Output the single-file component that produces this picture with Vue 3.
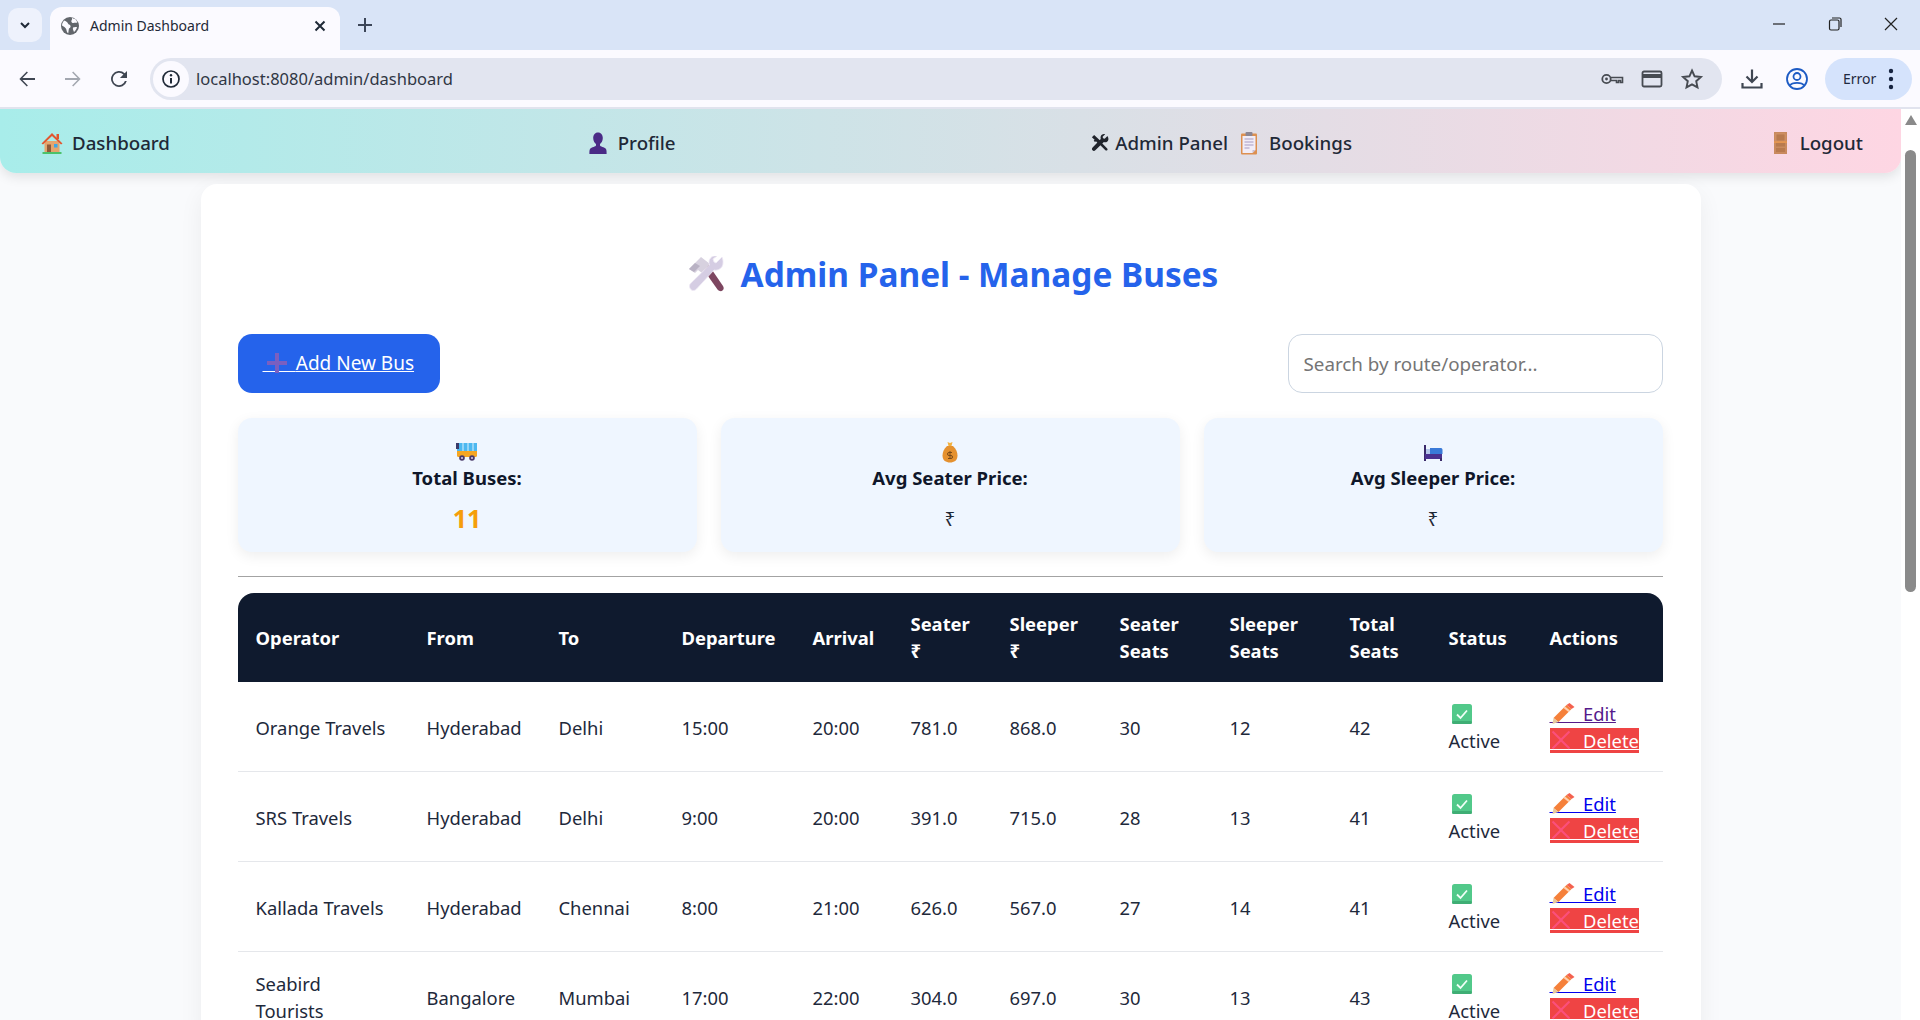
<script setup>
const buses = [
  { id: 1, operator: 'Orange Travels', from: 'Hyderabad', to: 'Delhi', dep: '15:00', arr: '20:00', seater: '781.0', sleeper: '868.0', seaterSeats: 30, sleeperSeats: 12, total: 42, visited: true },
  { id: 2, operator: 'SRS Travels', from: 'Hyderabad', to: 'Delhi', dep: '9:00', arr: '20:00', seater: '391.0', sleeper: '715.0', seaterSeats: 28, sleeperSeats: 13, total: 41 },
  { id: 3, operator: 'Kallada Travels', from: 'Hyderabad', to: 'Chennai', dep: '8:00', arr: '21:00', seater: '626.0', sleeper: '567.0', seaterSeats: 27, sleeperSeats: 14, total: 41 },
  { id: 4, operator: 'Seabird Tourists', from: 'Bangalore', to: 'Mumbai', dep: '17:00', arr: '22:00', seater: '304.0', sleeper: '697.0', seaterSeats: 30, sleeperSeats: 13, total: 43 }
]

const colWidths = [171, 132, 123, 131, 98, 99, 110, 110, 120, 99, 101, 131]
</script>

<template>
  <div class="window">
    <!-- browser tab strip -->
    <div class="tabstrip">
      <div class="tab-search">
        <svg width="14" height="14" viewBox="0 0 14 14"><path d="M3 5l4 4 4-4" fill="none" stroke="#1f2937" stroke-width="2"/></svg>
      </div>
      <div class="tab">
        <svg width="20" height="20" viewBox="0 0 20 20"><circle cx="10" cy="10" r="9" fill="#62666c"/><path d="M4 4.500c2 .5 3.500 1.500 4 3 .3 1.200 2 1 2.500 2.200.4 1.300-.5 2.300-1.500 2.800-.5 1.500-.3 3-.8 4.800-1.500-1-1.700-3-2-4.300C5.500 11.500 3.500 10.500 2 9.500 2 7.500 3 6 4 4.500zM12 1.800c1 .9 2.500 1 3.500 1.500.8 1 1.500 2 1.800 3.200-1.300.5-2.800-.2-3.800.5-1 .3-2-.5-2.200-1.500 0-1.200 1.200-2 .7-3.700zM13 11.500c1.200-.7 2.800-.7 4-.5-.4 2-1.500 3.800-3 5-.5-1.500-1.500-3-1-4.500z" fill="#fbfaff"/></svg>
        <span class="tab-title">Admin Dashboard</span>
        <svg class="tab-x" width="14" height="14" viewBox="0 0 14 14"><path d="M2.500 2.500l9 9M11.500 2.500l-9 9" stroke="#1f2937" stroke-width="2"/></svg>
      </div>
      <svg class="newtab" width="18" height="18" viewBox="0 0 18 18"><path d="M9 2v14M2 9h14" stroke="#3c4658" stroke-width="2"/></svg>
      <div class="win-controls">
        <svg width="16" height="16" viewBox="0 0 16 16"><path d="M2 8h12" stroke="#222" stroke-width="1.200"/></svg>
        <svg width="16" height="16" viewBox="0 0 16 16"><rect x="2.500" y="4" width="9.500" height="10" rx="1.500" fill="none" stroke="#222" stroke-width="1.200"/><path d="M5 2h7.500A1.500 1.500 0 0 1 14 3.500V11" fill="none" stroke="#222" stroke-width="1.200"/></svg>
        <svg width="16" height="16" viewBox="0 0 16 16"><path d="M2 2l12 12M14 2L2 14" stroke="#222" stroke-width="1.200"/></svg>
      </div>
    </div>

    <!-- browser toolbar -->
    <div class="toolbar">
      <div class="nav-btns">
        <svg width="24" height="24" viewBox="0 0 24 24"><path d="M20 11.100H7.500l5.400-5.500-1.100-1.100L4.400 12l7.400 7.500 1.100-1.100-5.400-5.500H20z" fill="#3f4652"/></svg>
        <svg width="24" height="24" viewBox="0 0 24 24"><path d="M4 11.100h12.500l-5.400-5.500 1.100-1.100 7.400 7.500-7.400 7.500-1.100-1.100 5.400-5.500H4z" fill="#a3a7b0"/></svg>
        <svg width="24" height="24" viewBox="0 0 24 24"><path d="M17.700 6.300A8 8 0 1 0 19.800 14h-1.900a6.200 6.200 0 1 1-1.500-6.400L13 11h7V4z" fill="#3f4652"/></svg>
      </div>
      <div class="omnibox">
        <div class="info-chip">
          <svg width="20" height="20" viewBox="0 0 20 20"><circle cx="10" cy="10" r="8" fill="none" stroke="#1f2937" stroke-width="1.700"/><path d="M10 9v5.500" stroke="#1f2937" stroke-width="2"/><circle cx="10" cy="6.300" r="1.200" fill="#1f2937"/></svg>
        </div>
        <span class="url">localhost:8080/admin/dashboard</span>
        <div class="omni-icons">
          <svg width="24" height="24" viewBox="0 0 24 24"><circle cx="6.500" cy="12" r="4.200" fill="none" stroke="#474b52" stroke-width="1.800"/><circle cx="6.500" cy="12" r="1.400" fill="#474b52"/><path d="M10.500 10.500h12v5h-2v-2h-2v2h-2v-2h-6" fill="none" stroke="#474b52" stroke-width="1.600"/></svg>
          <svg width="24" height="24" viewBox="0 0 24 24"><rect x="2.500" y="4.500" width="19" height="15" rx="1.500" fill="none" stroke="#474b52" stroke-width="1.800"/><rect x="3" y="7" width="18" height="4" fill="#474b52"/></svg>
          <svg width="24" height="24" viewBox="0 0 24 24"><path d="M12 3.500l2.600 5.800 6.300.7-4.700 4.200 1.300 6.200L12 17.300l-5.500 3.100 1.300-6.200L3.100 10l6.300-.7z" fill="none" stroke="#474b52" stroke-width="1.900"/></svg>
        </div>
      </div>
      <div class="tool-icons">
        <svg width="24" height="24" viewBox="0 0 24 24"><path d="M12 2.500v12M6.500 9.500l5.500 5.500 5.500-5.500M2.500 16v4.500h19V16" fill="none" stroke="#3f4652" stroke-width="2.200"/></svg>
        <svg width="24" height="24" viewBox="0 0 24 24"><circle cx="12" cy="12" r="10" fill="none" stroke="#1d5bc4" stroke-width="1.800"/><circle cx="12" cy="9.500" r="3.500" fill="none" stroke="#1d5bc4" stroke-width="1.800"/><path d="M5 18.500c2-3.500 12-3.500 14 0" fill="none" stroke="#1d5bc4" stroke-width="1.800"/></svg>
      </div>
      <div class="error-pill">
        <span>Error</span>
        <svg width="6" height="22" viewBox="0 0 6 22"><circle cx="3" cy="3" r="2.200" fill="#16233f"/><circle cx="3" cy="11" r="2.200" fill="#16233f"/><circle cx="3" cy="19" r="2.200" fill="#16233f"/></svg>
      </div>
    </div>

    <div class="viewport">
      <div class="page">
        <nav class="navbar">
          <a class="nav-link">
            <svg class="nav-emoji" width="24" height="24" viewBox="0 0 24 24"><rect x="4.500" y="10" width="15" height="11" fill="#e5a56d"/><rect x="7" y="13.500" width="4" height="7.500" fill="#8d5a3a"/><rect x="14" y="13" width="3.500" height="3.500" fill="#3ba7e8"/><path d="M12 2L1.500 12.500l1.500 1L12 5l9 8.500 1.500-1z" fill="#e2562f"/><rect x="16.500" y="3" width="2.500" height="5" fill="#e2562f"/><rect x="2.500" y="21" width="19" height="2" fill="#4cc26a"/></svg>
            Dashboard
          </a>
          <a class="nav-link">
            <svg class="nav-emoji" width="24" height="24" viewBox="0 0 24 24"><path d="M12 1.500c3.200 0 4.800 2.500 4.800 5.500 0 2.800-1.400 5-2.800 6v1.500c0 1 4.500 1.500 6 3.500.6.900.6 3 .6 5H3.400c0-2 0-4.100.6-5 1.500-2 6-2.500 6-3.500V13c-1.400-1-2.800-3.200-2.800-6 0-3 1.600-5.500 4.800-5.500z" fill="#4a2b86"/></svg>
            Profile
          </a>
          <div class="nav-group">
            <a class="nav-link admin-link">
              <svg class="tools-mono" width="18" height="18" viewBox="0 0 20 20"><path d="M3.500 1L1 3.500l3 3-1 1 1.500 1.500 1-1 3 3L11 8 3.500 1z" fill="#20242c"/><path d="M18 2.500l-2.800 2.800-1.800-.5-.5-1.800L15.700.2c-2-.6-4.500.2-5 2.800-.2 1 0 1.800.2 2.500L1.800 15c-1 1-1 2.200-.1 3.100.9.900 2.200.9 3.100-.1l9.500-9.100c.8.300 1.700.400 2.500.2 2.500-.6 3.400-3.400 1.700-6.600z" fill="#20242c"/><path d="M9 11l2-2 7 7c.6.600.6 1.400 0 2s-1.400.6-2 0z" fill="#20242c"/></svg>
              Admin Panel
            </a>
            <a class="nav-link">
              <svg class="nav-emoji" width="24" height="24" viewBox="0 0 24 24"><rect x="4" y="2.500" width="16" height="21" rx="1" fill="#dd9050"/><path d="M5.500 5h13v14l-3 3h-10z" fill="#f1edf7"/><path d="M18.500 19h-3v3z" fill="#c9bfd2"/><rect x="8.500" y="1" width="7" height="4" rx="1" fill="#8b8693"/><path d="M7.500 8h9M7.500 11h9M7.500 14h9M7.500 17h5" stroke="#a89bc4" stroke-width="1.200"/></svg>
              Bookings
            </a>
          </div>
          <a class="nav-link">
            <svg class="nav-emoji" width="24" height="24" viewBox="0 0 24 24"><rect x="6" y="1" width="13" height="22" fill="#c98a5e"/><rect x="8" y="3" width="9" height="7" fill="#b87a4e" stroke="#d99b6e" stroke-width=".6"/><rect x="8" y="12" width="9" height="3.500" fill="#b87a4e"/><rect x="8" y="17" width="9" height="4" fill="#b87a4e"/><rect x="6" y="10.500" width="13" height="1.200" fill="#f09a4a"/></svg>
            Logout
          </a>
        </nav>

        <main class="panel">
          <h1 class="panel-title">
            <svg class="title-emoji" width="38" height="36" viewBox="0 0 38 36"><path d="M16 13l5-5 15 22c1 2 1 3-.5 4.500S32 35 30.500 33.500z" fill="#7d4660"/><path d="M2 13l12-12 9 7-8 9-4-3-3 3z" fill="#d7d1df"/><path d="M2 13l6-6 5 3-6 6z" fill="#b9b2c4"/><path d="M35 1l-6 6-2-1-1-3 4-3c-4-1-8 2-8 6 0 1 0 2 .5 3L4 27c-2 2-2 4-.5 6s4 2 6 0L27 14c4 1 9-2 9-7 0-2 0-4-1-6z" fill="#d5cde3" stroke="#efeaf5" stroke-width=".8"/></svg>
            Admin Panel - Manage Buses
          </h1>

          <div class="top-actions">
            <a class="add-btn">
              <span class="glyph-slot plus-slot">&nbsp;&nbsp;&nbsp;&nbsp;&nbsp;&nbsp;<svg width="20" height="20" viewBox="0 0 20 20"><path d="M8 0h4v8h8v4h-8v8H8v-8H0V8h8z" fill="#7a5fc0"/></svg></span>Add New Bus
            </a>
            <input class="search" type="text" placeholder="Search by route/operator..." />
          </div>

          <section class="stats">
            <div class="stat-card">
              <svg class="stat-emoji" width="22" height="20" viewBox="0 0 22 20"><rect x="1" y="1" width="20" height="14" rx="1.500" fill="#f5a623"/><rect x="1" y="1" width="20" height="8" fill="#4db8f0"/><path d="M7 1v8M12 1v8M17 1v8" stroke="#fff" stroke-width=".8"/><rect x="0" y="1" width="3" height="6" fill="#3a3a6a"/><circle cx="6" cy="16" r="2.800" fill="#4a3a6a"/><circle cx="16" cy="16" r="2.800" fill="#4a3a6a"/><circle cx="6" cy="16" r="1" fill="#d8d2e8"/><circle cx="16" cy="16" r="1" fill="#d8d2e8"/></svg>
              <div class="stat-label">Total Buses:</div>
              <div class="stat-value accent">11</div>
            </div>
            <div class="stat-card">
              <svg class="stat-emoji" width="22" height="22" viewBox="0 0 22 22"><path d="M8 5h6c3 3 4.500 6 4.500 9.500 0 5-3.500 7-7.500 7s-7.500-2-7.500-7C3.500 11 5 8 8 5z" fill="#e5912f"/><path d="M8.500 1l2.500 1 2.500-1-1 4h-3z" fill="#f3b23f"/><path d="M11 10v8M13 11.500h-3a1.300 1.300 0 0 0 0 3h2a1.300 1.300 0 0 1 0 3H9" fill="none" stroke="#7a4a18" stroke-width="1"/></svg>
              <div class="stat-label">Avg Seater Price:</div>
              <div class="stat-value">₹</div>
            </div>
            <div class="stat-card">
              <svg class="stat-emoji" width="22" height="20" viewBox="0 0 22 20"><rect x="2" y="3" width="2" height="16" fill="#3a2a6a"/><rect x="3" y="12" width="17" height="5" fill="#4a3190"/><path d="M8 6h11c1 0 1.500 1 1.500 2v4H8z" fill="#3a7ad8"/><rect x="4" y="7" width="4" height="5" fill="#b5c7ea"/><rect x="18" y="16" width="2" height="3" fill="#3a2a6a"/></svg>
              <div class="stat-label">Avg Sleeper Price:</div>
              <div class="stat-value">₹</div>
            </div>
          </section>

          <hr class="divider" />

          <table class="bus-table">
            <colgroup>
              <col v-for="(w, i) in colWidths" :key="i" :style="{ width: w + 'px' }" />
            </colgroup>
            <thead>
              <tr>
                <th>Operator</th>
                <th>From</th>
                <th>To</th>
                <th>Departure</th>
                <th>Arrival</th>
                <th>Seater ₹</th>
                <th>Sleeper ₹</th>
                <th>Seater Seats</th>
                <th>Sleeper Seats</th>
                <th>Total Seats</th>
                <th>Status</th>
                <th>Actions</th>
              </tr>
            </thead>
            <tbody>
              <tr v-for="bus in buses" :key="bus.id">
                <td>{{ bus.operator }}</td>
                <td>{{ bus.from }}</td>
                <td>{{ bus.to }}</td>
                <td>{{ bus.dep }}</td>
                <td>{{ bus.arr }}</td>
                <td>{{ bus.seater }}</td>
                <td>{{ bus.sleeper }}</td>
                <td>{{ bus.seaterSeats }}</td>
                <td>{{ bus.sleeperSeats }}</td>
                <td>{{ bus.total }}</td>
                <td>
                  <svg class="check" width="20" height="20" viewBox="0 0 20 20"><rect width="20" height="20" rx="2.500" fill="#52c98a"/><rect y="17" width="20" height="3" rx="1.500" fill="#3fae74"/><path d="M5 10.500l3.500 3.500L15 6.500" fill="none" stroke="#f2fff7" stroke-width="1.800"/></svg><br />Active
                </td>
                <td>
                  <a class="edit-link" :class="{ visited: bus.visited }">
                    <span class="glyph-slot">&nbsp;&nbsp;&nbsp;&nbsp;&nbsp;&nbsp;&nbsp;<svg width="25" height="21" viewBox="0 0 24 21"><path d="M3 15L16 2l5 4L8 19z" fill="#f5803a"/><path d="M16 2l3-2 5 4-3 2z" fill="#f4604e"/><path d="M14.500 3.500l5 4-1.500 1.500-5-4z" fill="#ffd0b0"/><path d="M3 15l5 4-6 2z" fill="#e8c9a0"/></svg></span>Edit
                  </a>
                  <br />
                  <a class="delete-link">
                    <span class="glyph-slot">&nbsp;&nbsp;&nbsp;&nbsp;&nbsp;&nbsp;&nbsp;<svg width="22" height="22" viewBox="0 0 24 22"><path d="M3.500 1l8.500 8 8.500-8 1.500 1.500-8.500 8.500 8.500 8.500-1.500 1.500-8.500-8-8.500 8L2 19.500l8.500-8.500L2 2.500z" fill="#fb4f7c"/></svg></span>Delete
                  </a>
                </td>
              </tr>
            </tbody>
          </table>
        </main>
      </div>

      <div class="scrollbar">
        <svg width="12" height="10" viewBox="0 0 12 10"><path d="M6 0l6 10H0z" fill="#8a8a8a"/></svg>
        <div class="thumb"></div>
      </div>
    </div>
  </div>
</template>

<style>
html,
body {
  margin: 0;
  height: 100%;
  overflow: hidden;
}
</style>

<style scoped>
.window {
  display: flex;
  flex-direction: column;
  height: 100vh;
  overflow: hidden;
  font-family: "Noto Sans", "DejaVu Sans", sans-serif;
  color: #111827;
}

.tabstrip {
  display: flex;
  align-items: flex-end;
  height: 50px;
  flex-shrink: 0;
  padding-left: 8px;
  background: #d9e4f7;
}

.tab-search {
  display: flex;
  align-items: center;
  justify-content: center;
  width: 34px;
  height: 34px;
  margin-bottom: 8px;
  border-radius: 10px;
  background: #eef2fc;
}

.tab {
  display: flex;
  align-items: center;
  width: 290px;
  height: 43px;
  box-sizing: border-box;
  margin-left: 8px;
  padding: 0 13px 6px 10px;
  border-radius: 12px 12px 0 0;
  background: #fbfaff;
}

.tab-title {
  flex: 1;
  margin-left: 10px;
  font-size: 14px;
  color: #1f2937;
}

.newtab {
  margin: 0 0 16px 16px;
}

.win-controls {
  display: flex;
  gap: 40px;
  margin-left: auto;
  margin-bottom: 18px;
  padding-right: 21px;
}

.toolbar {
  display: flex;
  align-items: center;
  height: 59px;
  flex-shrink: 0;
  box-sizing: border-box;
  padding-right: 8px;
  border-bottom: 2px solid #e1e3ee;
  background: #fbfaff;
}

.nav-btns {
  display: flex;
  gap: 22px;
  width: 150px;
  box-sizing: border-box;
  padding-left: 15px;
}

.omnibox {
  display: flex;
  align-items: center;
  width: 1572px;
  height: 42px;
  box-sizing: border-box;
  padding: 0 18px 0 3px;
  border-radius: 21px;
  background: #e2e5f0;
}

.info-chip {
  display: flex;
  align-items: center;
  justify-content: center;
  width: 36px;
  height: 36px;
  border-radius: 50%;
  background: #fbfaff;
}

.url {
  margin-left: 7px;
  font-size: 16.500px;
  color: #303744;
}

.omni-icons {
  display: flex;
  gap: 16px;
  margin-left: auto;
}

.tool-icons {
  display: flex;
  gap: 21px;
  margin-left: 18px;
}

.error-pill {
  display: flex;
  align-items: center;
  justify-content: space-between;
  width: 87px;
  height: 42px;
  box-sizing: border-box;
  margin-left: 16px;
  padding: 0 18px;
  border-radius: 21px;
  background: #d5e3fc;
  font-size: 14px;
  color: #1f2a40;
}

.viewport {
  display: flex;
  flex: 1;
  min-height: 0;
}

.page {
  flex: 1;
  min-width: 0;
  overflow: hidden;
  background: #f9fafc;
}

.scrollbar {
  display: flex;
  flex-direction: column;
  align-items: center;
  width: 19px;
  flex-shrink: 0;
  padding-top: 6px;
  background: #fff;
}

.thumb {
  width: 11px;
  height: 442px;
  margin-top: 25px;
  border-radius: 6px;
  background: #8a8a8a;
}

.navbar {
  display: flex;
  align-items: center;
  justify-content: space-between;
  height: 64px;
  box-sizing: border-box;
  padding: 3px 38px 0 40px;
  border-radius: 0 0 16px 16px;
  background: linear-gradient(90deg, #a8edea, #fed6e3);
  box-shadow: 0 4px 12px rgba(0, 0, 0, 0.1);
}

.nav-group {
  display: flex;
  gap: 9px;
}

.nav-link {
  display: flex;
  align-items: center;
  font-size: 18.700px;
  font-weight: 500;
  color: #1f2937;
}

.nav-emoji {
  margin-right: 8px;
}

.tools-mono {
  margin-right: 6px;
}

.panel {
  box-sizing: border-box;
  width: 1500px;
  margin: 11px auto 0;
  padding: 36px 38px 0 37px;
  border-radius: 16px;
  background: #fff;
  box-shadow: 0 8px 24px rgba(0, 0, 0, 0.06);
}

.panel-title {
  display: flex;
  align-items: center;
  justify-content: center;
  gap: 16px;
  height: 60px;
  margin: 24px 0 30px;
  padding-left: 5px;
  font-size: 33.400px;
  font-weight: 700;
  color: #2563eb;
}

.top-actions {
  display: flex;
  align-items: center;
  justify-content: space-between;
}

.add-btn {
  display: block;
  box-sizing: border-box;
  width: 202px;
  height: 59px;
  padding: 16px 0 0 25px;
  border-radius: 14px;
  background: #2563eb;
  font-size: 19px;
  line-height: 27px;
  color: #fff;
  text-decoration: underline;
}

.search {
  box-sizing: border-box;
  width: 375px;
  height: 59px;
  padding: 0 15px;
  border: 1px solid #cbd5e1;
  border-radius: 14px;
  outline: none;
  font-family: inherit;
  font-size: 18.800px;
}

.search::placeholder {
  color: #757575;
}

.stats {
  display: grid;
  grid-template-columns: repeat(3, 1fr);
  gap: 24px;
  margin-top: 25px;
}

.stat-card {
  display: flex;
  flex-direction: column;
  align-items: center;
  height: 134px;
  box-sizing: border-box;
  padding-top: 23px;
  border-radius: 14px;
  background: #eff6ff;
  box-shadow: 0 4px 14px rgba(0, 0, 0, 0.07);
}

.stat-emoji {
  height: 22px;
}

.stat-label {
  margin-top: 1px;
  font-size: 18.500px;
  font-weight: 700;
  line-height: 27px;
  color: #0f172a;
}

.stat-value {
  margin-top: 7px;
  padding-top: 2px;
  font-size: 19px;
  line-height: 38px;
  color: #1f2937;
}

.stat-value.accent {
  padding-top: 0;
  font-size: 25px;
  font-weight: 700;
  line-height: 40px;
  color: #f59e0b;
}

.divider {
  height: 1px;
  margin: 24px 0 16px;
  border: 0;
  background: #a3a3a3;
}

.bus-table {
  width: 1425px;
  table-layout: fixed;
  border-collapse: separate;
  border-spacing: 0;
  font-size: 18.400px;
  line-height: 27px;
}

.bus-table th {
  padding: 17px 18px 18px;
  background: #0f1a2e;
  color: #fff;
  font-weight: 700;
  text-align: left;
}

.bus-table th:first-child {
  border-top-left-radius: 16px;
}

.bus-table th:last-child {
  border-top-right-radius: 16px;
}

.bus-table td {
  height: 54px;
  padding: 18px 18px 17px;
  border-bottom: 1px solid #e5e7eb;
  background: #fff;
  color: #1e293b;
  vertical-align: middle;
}

.check {
  margin-left: 3px;
  vertical-align: -3px;
}

.glyph-slot {
  position: relative;
}

.glyph-slot svg {
  position: absolute;
  left: 0;
  bottom: 2px;
}

.plus-slot {
  letter-spacing: 0.6px;
}

.plus-slot svg {
  left: 4px;
  bottom: 3px;
}

.edit-link {
  color: #0000ee;
  text-decoration: underline;
}

.edit-link.visited {
  color: #551a8b;
}

.delete-link {
  background: #ef4444;
  color: #fff;
  text-decoration: underline;
}
</style>
